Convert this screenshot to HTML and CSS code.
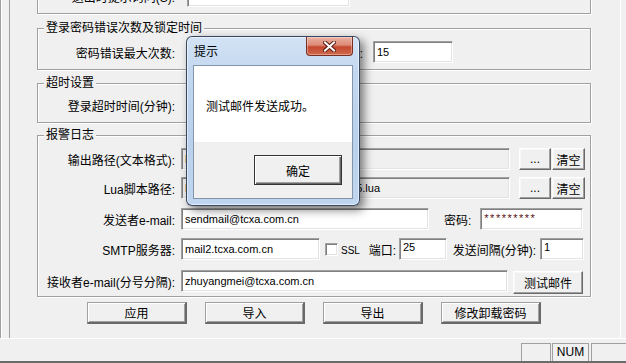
FILE: index.html
```html
<!DOCTYPE html>
<html lang="zh-CN">
<head>
    <meta charset="UTF-8">
    <title>报警设置</title>
    <link rel="stylesheet" href="styles.css">
</head>
<body>
<div class="app">
    <div class="main">
        <div class="panel">
            <!-- 上一个分组，只露出底部 -->
            <div class="group g1">
                <div class="row">
                    <span class="lbl">退出时提示询问(S):</span>
                    <div class="edit shifted w-163"></div>
                </div>
            </div>

            <div class="group g2">
                <span class="group-title">登录密码错误次数及锁定时间</span>
                <div class="row">
                    <span class="lbl">密码错误最大次数:</span>
                    <div class="edit shifted w-74">5</div>
                    <span class="lbl-lock">锁定时间(分钟):</span>
                    <div class="edit w-80">15</div>
                </div>
            </div>

            <div class="group g3">
                <span class="group-title">超时设置</span>
                <div class="row">
                    <span class="lbl">登录超时时间(分钟):</span>
                    <div class="edit shifted w-74">30</div>
                </div>
            </div>

            <div class="group g4">
                <span class="group-title">报警日志</span>
                <div class="row">
                    <span class="lbl">输出路径(文本格式):</span>
                    <div class="edit readonly w-329">D:\log\alarm</div>
                    <button class="btn btn-dots">...</button>
                    <button class="btn btn-clear">清空</button>
                </div>
                <div class="row r2">
                    <span class="lbl">Lua脚本路径:</span>
                    <div class="edit readonly w-329">D:\Program Files\TCXA\Server\test5.lua</div>
                    <button class="btn btn-dots">...</button>
                    <button class="btn btn-clear">清空</button>
                </div>
                <div class="row r3">
                    <span class="lbl">发送者e-mail:</span>
                    <div class="edit w-248">sendmail@tcxa.com.cn</div>
                    <span class="lbl-pwd">密码:</span>
                    <div class="edit pwd w-103">*********</div>
                </div>
                <div class="row r4">
                    <span class="lbl">SMTP服务器:</span>
                    <div class="edit w-139">mail2.tcxa.com.cn</div>
                    <span class="check"></span>
                    <span class="ssl">SSL</span>
                    <span class="lbl-port">端口:</span>
                    <div class="edit top w-48">25</div>
                    <span class="lbl-interval">发送间隔(分钟):</span>
                    <div class="edit top w-44">1</div>
                </div>
                <div class="row r5">
                    <span class="lbl">接收者e-mail(分号分隔):</span>
                    <div class="edit w-327">zhuyangmei@tcxa.com.cn</div>
                    <button class="btn btn-test">测试邮件</button>
                </div>
            </div>

            <div class="actions">
                <button class="btn btn-action">应用</button>
                <button class="btn btn-action">导入</button>
                <button class="btn btn-action">导出</button>
                <button class="btn btn-action">修改卸载密码</button>
            </div>
        </div>
    </div>

    <div class="statusbar">
        <span class="pane pane-1"></span>
        <span class="pane pane-num">NUM</span>
        <span class="pane pane-3"></span>
    </div>

    <!-- 消息框 -->
    <div class="dialog">
        <div class="dlg-title">
            <span>提示</span>
            <span class="dlg-close">
                <svg width="13" height="11" viewBox="0 0 13 11">
                    <path d="M2 1.5 L11 9.5 M11 1.5 L2 9.5" stroke="#5a1d14" stroke-width="4" stroke-linecap="square"/>
                    <path d="M2 1.5 L11 9.5 M11 1.5 L2 9.5" stroke="#fff" stroke-width="2" stroke-linecap="square"/>
                </svg>
            </span>
        </div>
        <div class="dlg-client">
            <div class="dlg-message">测试邮件发送成功。</div>
            <div class="dlg-buttons">
                <button class="btn btn-ok">确定</button>
            </div>
        </div>
    </div>
</div>
</body>
</html>
```

FILE: styles.css
```css
body {
    margin: 0;
    background-color: #f0f0f0;
    font-family: "Liberation Sans", "Noto Sans CJK SC", sans-serif;
    font-size: 12px;
    color: #000;
    overflow: hidden;
}

.app {
    position: relative;
    width: 626px;
    height: 363px;
    overflow: hidden;
    display: flex;
    flex-direction: column;
}

.main {
    height: 338px;
    flex-shrink: 0;
    border-left: 1px solid #a0a0a0;
    box-shadow: inset 1px 0 #fff;
    padding-left: 8px;
}

.panel {
    height: 338px;
    width: 612px;
    box-sizing: border-box;
    border-left: 1px solid #a0a0a0;
    border-right: 1px solid #fff;
    padding-left: 27px;
    overflow: hidden;
}

/* group boxes */
.group {
    position: relative;
    width: 554px;
    box-sizing: border-box;
    border: 1px solid #a0a0a0;
    box-shadow: inset 1px 1px #fff, 1px 1px #fff;
}

.group-title {
    position: absolute;
    top: -9px;
    left: 6px;
    padding: 0 2px;
    line-height: 16px;
    background-color: #f0f0f0;
}

.g1 {
    margin-top: -28px;
    padding: 12px 0 6px;
}

.g2 {
    margin-top: 14px;
    padding: 12px 0 6px;
}

.g3 {
    margin-top: 13px;
    padding: 10px 0 6px;
}

.g4 {
    margin-top: 12px;
    padding: 12px 0 4px;
}

.row {
    display: flex;
    align-items: center;
    height: 22px;
}

.r2 { margin-top: 7px; }
.r3 { margin-top: 9px; }
.r4 { margin-top: 8px; }
.r5 { margin-top: 10px; }

.lbl {
    width: 137px;
    margin-right: 6px;
    text-align: right;
    white-space: nowrap;
}

.lbl-lock {
    width: 102px;
    margin-right: 10px;
    text-align: right;
    white-space: nowrap;
}

.lbl-pwd {
    margin-left: 15px;
    margin-right: 9px;
    white-space: nowrap;
}

.lbl-port {
    width: 29px;
    margin-right: 3px;
    text-align: right;
    white-space: nowrap;
}

.lbl-interval {
    width: 85px;
    margin-left: 4px;
    margin-right: 4px;
    text-align: right;
    white-space: nowrap;
}

/* edit boxes */
.edit {
    height: 22px;
    box-sizing: border-box;
    border: 1px solid;
    border-color: #a0a0a0 #fff #fff #a0a0a0;
    box-shadow: inset 1px 1px #808080, inset -1px -1px #e3e3e3;
    background-color: #fff;
    padding: 0 3px;
    font-size: 11px;
    line-height: 20px;
    white-space: nowrap;
    overflow: hidden;
    flex-shrink: 0;
}

.edit.shifted {
    margin-left: 6px;
}

.edit.readonly {
    background-color: #f0f0f0;
}

.edit.top {
    line-height: 16px;
}

.edit.pwd {
    color: #5a1010;
    letter-spacing: 1.5px;
    line-height: 18px;
}

.w-163 { width: 163px; }
.w-74 { width: 74px; }
.w-80 { width: 80px; }
.w-329 { width: 329px; margin-right: 9px; }
.w-248 { width: 248px; }
.w-103 { width: 103px; }
.w-139 { width: 139px; }
.w-48 { width: 48px; }
.w-44 { width: 44px; }
.w-327 { width: 327px; margin-right: 5px; }

.check {
    width: 13px;
    height: 13px;
    box-sizing: border-box;
    margin-left: 5px;
    border: 1px solid;
    border-color: #a0a0a0 #fff #fff #a0a0a0;
    box-shadow: inset 1px 1px #808080, inset -1px -1px #e3e3e3;
    background-color: #fff;
}

.ssl {
    width: 26px;
    margin-left: 3px;
    font-size: 10px;
    padding-top: 2px;
}

/* buttons */
.btn {
    height: 22px;
    box-sizing: border-box;
    padding: 0;
    background-color: #f0f0f0;
    border: 1px solid;
    border-color: #fff #696969 #696969 #fff;
    box-shadow: inset -1px -1px #a0a0a0, inset 1px 1px #f8f8f8;
    font-family: inherit;
    font-size: 12px;
    color: #000;
    flex-shrink: 0;
}

.btn-dots {
    width: 32px;
    margin-right: 1px;
    line-height: 14px;
}

.btn-clear {
    width: 33px;
}

.btn-test {
    width: 70px;
    height: 23px;
    margin-top: 2px;
}

.actions {
    display: flex;
    gap: 18px;
    margin-top: 5px;
    padding-left: 50px;
}

.btn-action {
    width: 100px;
    border-color: #a0a0a0 #696969 #696969 #a0a0a0;
    border-width: 1px 2px 2px 1px;
    box-shadow: inset 1px 1px #fff, inset -1px -1px #a0a0a0;
}

/* status bar */
.statusbar {
    height: 25px;
    box-sizing: border-box;
    flex-shrink: 0;
    border-top: 1px solid #fff;
    border-bottom: 2px solid #6b6b6b;
    padding-top: 4px;
    display: flex;
    justify-content: flex-end;
}

.pane {
    height: 18px;
    box-sizing: border-box;
    border: 1px solid #a0a0a0;
    border-bottom: none;
    line-height: 17px;
    text-align: center;
}

.pane-1 { width: 30px; margin-right: 1px; }
.pane-num { width: 37px; margin-right: 2px; font-size: 12px; }
.pane-3 { width: 35px; border-right: none; }

/* message box */
.dialog {
    position: absolute;
    left: 186px;
    top: 36px;
    width: 174px;
    height: 170px;
    box-sizing: border-box;
    display: flex;
    flex-direction: column;
    padding: 0 6px 6px;
    border: 1px solid rgba(30, 45, 70, 0.85);
    border-radius: 6px;
    background: linear-gradient(180deg, #d3e3f5 0%, #c3d8f0 20%, #b9d1ec 60%, #c0d6ef 100%);
    box-shadow: inset 0 0 0 1px rgba(255, 255, 255, 0.55), 4px 4px 10px rgba(0, 0, 0, 0.5);
}

.dlg-title {
    position: relative;
    height: 28px;
    flex-shrink: 0;
    display: flex;
    align-items: center;
    padding-left: 1px;
    padding-bottom: 1px;
    box-sizing: border-box;
}

.dlg-close {
    position: absolute;
    top: 0;
    right: 0;
    width: 47px;
    height: 19px;
    box-sizing: border-box;
    border: 1px solid #7a2e22;
    border-top: none;
    border-radius: 0 0 4px 4px;
    background: linear-gradient(180deg, #ebb2a4 0%, #dc8a75 45%, #c4482f 55%, #cf6a4c 100%);
    box-shadow: inset 0 0 0 1px rgba(255, 255, 255, 0.35);
    display: flex;
    align-items: center;
    justify-content: center;
}

.dlg-client {
    flex: 1;
    display: flex;
    flex-direction: column;
    border: 1px solid #8494ab;
    background-color: #f0f0f0;
}

.dlg-message {
    height: 76px;
    flex-shrink: 0;
    background-color: #fff;
    padding-left: 12px;
    padding-top: 31px;
    box-sizing: border-box;
}

.dlg-buttons {
    display: flex;
    justify-content: flex-end;
    padding: 13px 10px 0 0;
}

.btn-ok {
    width: 88px;
    height: 30px;
    border: 1px solid #333;
    box-shadow: inset 1px 1px #fff, inset -1px -1px #696969, inset -2px -2px #a0a0a0;
}
```
